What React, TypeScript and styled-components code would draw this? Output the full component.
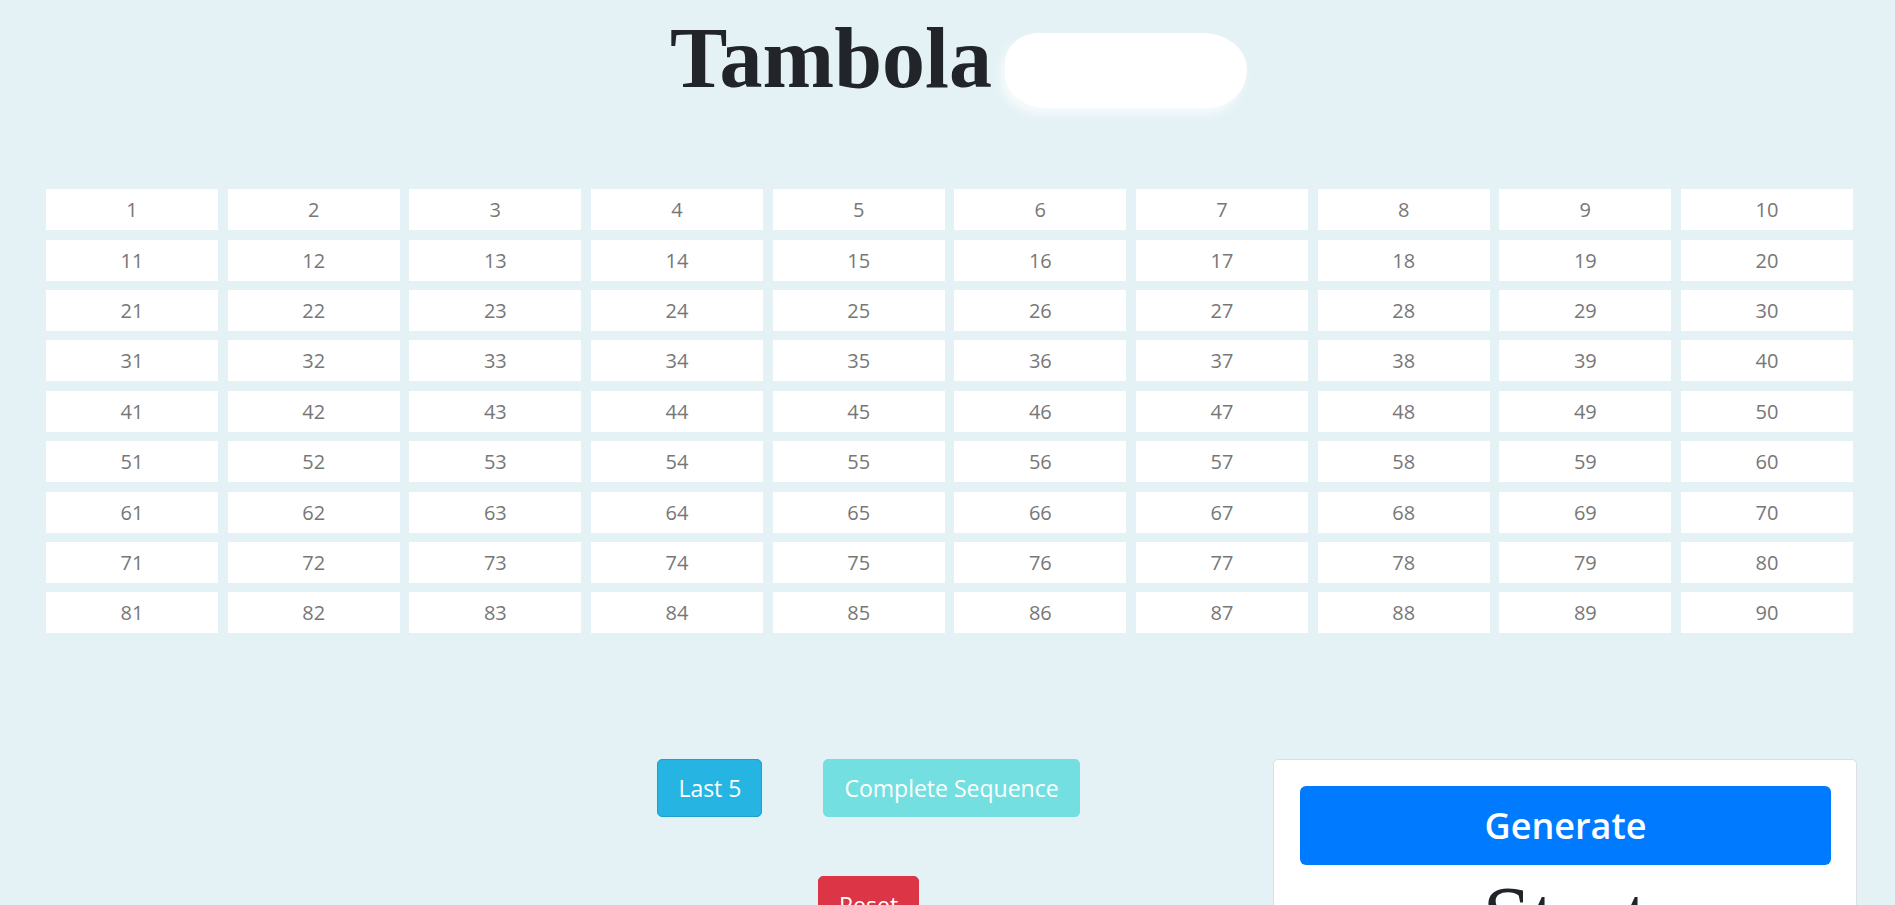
import { FC } from 'react';
import styled, { createGlobalStyle } from 'styled-components';

const GlobalStyle = createGlobalStyle`
  body {
    margin: 0;
    background-color: #e4f2f6;
    font-family: 'Open Sans', 'Noto Sans', sans-serif;
  }
`;

const Page = styled.div`
  min-height: 100vh;
`;

const TitleRow = styled.h1`
  display: flex;
  justify-content: center;
  align-items: flex-start;
  gap: 13px;
  margin: 7px 0 0;
  padding-left: 22px;
  font-family: 'Liberation Serif', serif;
  font-size: 86px;
  font-weight: 700;
  line-height: 1.2;
  color: #212529;
`;

const Redacted = styled.span`
  display: inline-block;
  width: 242px;
  height: 75px;
  margin-top: 26px;
  background: #fff;
  border-radius: 34px 44px 38px 42px / 30px 36px 38px 34px;
  box-shadow: -4px 6px 10px rgba(255, 255, 255, 0.7);
`;

const Board = styled.div`
  display: grid;
  grid-template-columns: repeat(10, 1fr);
  column-gap: 9.7px;
  row-gap: 9.4px;
  margin-top: 79px;
  padding: 0 42px 0 46px;
`;

const Cell = styled.div<{ $called?: boolean }>`
  height: 41px;
  display: flex;
  align-items: center;
  justify-content: center;
  background: ${(p) => (p.$called ? '#ffc107' : '#fff')};
  color: #777;
  font-size: 20px;
`;

const Bottom = styled.div`
  display: flex;
  align-items: flex-start;
  margin-top: 126px;
  padding: 0 38px 0 464px;
`;

const Controls = styled.div`
  flex: 1;
  display: flex;
  flex-direction: column;
  align-items: center;
  gap: 59px;
`;

const ButtonRow = styled.div`
  display: flex;
  gap: 61px;
`;

const Button = styled.button<{ $bg: string; $border: string }>`
  height: 58px;
  padding: 0 20px;
  border: 1px solid ${(p) => p.$border};
  border-radius: 5px;
  background: ${(p) => p.$bg};
  color: #fff;
  font-family: 'Open Sans', 'Noto Sans', sans-serif;
  font-size: 23px;
  line-height: 1;
  cursor: pointer;
`;

const Card = styled.div`
  width: 584px;
  box-sizing: border-box;
  padding: 26px 25px 20px 26px;
  background: #fff;
  border: 1px solid #dcdfe2;
  border-radius: 5px;
`;

const GenerateButton = styled.button`
  display: block;
  width: 100%;
  height: 79px;
  border: none;
  border-radius: 6px;
  background: #007bff;
  color: #fff;
  font-family: 'Open Sans', 'Noto Sans', sans-serif;
  font-size: 36px;
  font-weight: 600;
  cursor: pointer;
`;

const CurrentNumber = styled.h2`
  margin: 0;
  text-align: center;
  font-family: 'Liberation Serif', serif;
  font-size: 88px;
  font-weight: 400;
  line-height: 1.2;
  color: #212529;
`;

const numbers = Array.from({ length: 90 }, (_, i) => i + 1);

const App: FC = () => {
  return (
    <Page>
      <GlobalStyle />
      <TitleRow>
        <span>Tambola</span>
        <Redacted />
      </TitleRow>
      <Board>
        {numbers.map((n) => (
          <Cell key={n}>{n}</Cell>
        ))}
      </Board>
      <Bottom>
        <Controls>
          <ButtonRow>
            <Button $bg="#26b4e3" $border="#1f9fcb">
              Last 5
            </Button>
            <Button $bg="#74dfe0" $border="#74dfe0">
              Complete Sequence
            </Button>
          </ButtonRow>
          <Button $bg="#dc3545" $border="#dc3545">
            Reset
          </Button>
        </Controls>
        <Card>
          <GenerateButton>Generate</GenerateButton>
          <CurrentNumber>Start</CurrentNumber>
        </Card>
      </Bottom>
    </Page>
  );
};

export default App;
